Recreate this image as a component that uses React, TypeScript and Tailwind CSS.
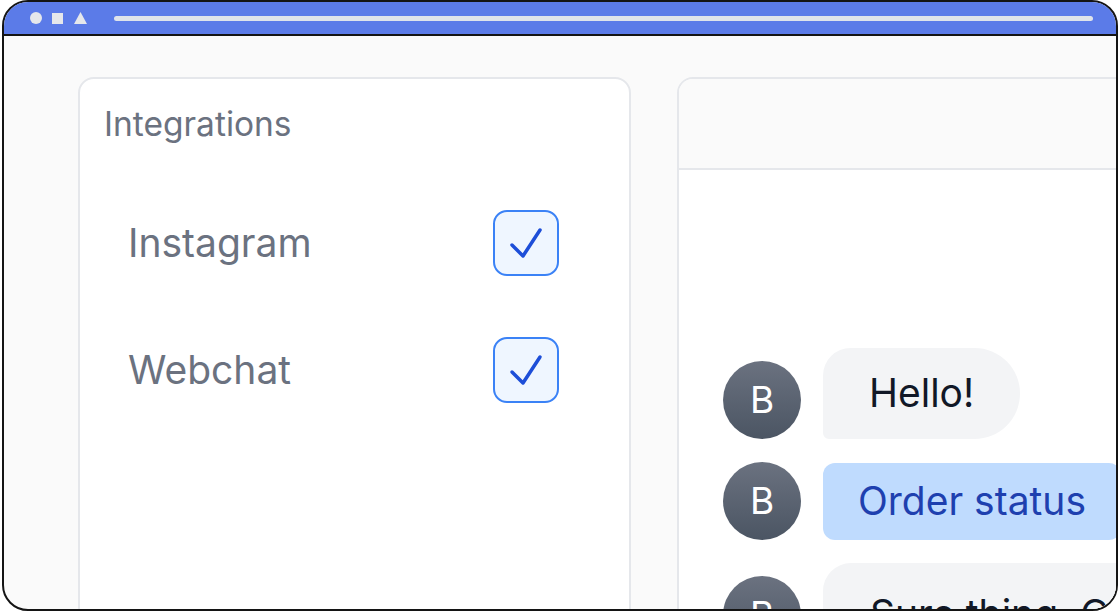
import React from "react";

function Check() {
  return (
    <div className="w-[66px] h-[66px] rounded-[14px] border-2 border-[#3b82f6] bg-[#eff6ff] flex items-center justify-center shrink-0">
      <svg width="66" height="66" viewBox="0 0 66 66" fill="none" className="-m-[2px]">
        <path d="M19 35l11 11 17-26" stroke="#1d4ed8" strokeWidth="3.5" strokeLinecap="round" strokeLinejoin="round" />
      </svg>
    </div>
  );
}

function Avatar() {
  return (
    <div className="w-[78px] h-[78px] rounded-full bg-gradient-to-b from-[#6b7280] to-[#4b5563] flex items-center justify-center text-white text-[37px] shrink-0">
      B
    </div>
  );
}

export default function App() {
  return (
    <div className="w-[1120px] h-[612px] bg-white overflow-hidden" style={{ fontFamily: "Inter, 'Noto Sans', sans-serif" }}>
      <div className="ml-[2px] w-[1116px] h-[611px] border-[2.5px] border-[#141414] rounded-[26px] overflow-hidden bg-[#fafafa] flex flex-col">
        {/* Browser bar */}
        <div className="h-[34px] shrink-0 bg-[#5b7be8] border-b-2 border-[#141414] flex items-center pl-[26px] pr-[23px]">
          <div className="w-[12px] h-[12px] rounded-full bg-[#e5e7eb]" />
          <div className="w-[11px] h-[11px] bg-[#e5e7eb] ml-[10px]" />
          <svg width="13" height="12" viewBox="0 0 13 12" className="ml-[11px]">
            <path d="M6.5 0L13 12H0z" fill="#e5e7eb" />
          </svg>
          <div className="flex-1 h-[5px] rounded-full bg-[#dfe3ea] ml-[27px]" />
        </div>

        {/* Body */}
        <div className="flex gap-[46px] pl-[74px] pt-[41px]">
          {/* Integrations panel */}
          <div className="w-[553px] h-[600px] shrink-0 bg-white border-2 border-[#e5e7eb] rounded-[16px] px-[24px] pt-[25px]">
            <div className="text-[33.5px] leading-[40px] text-[#6b7280]">Integrations</div>
            <div className="mt-[66px] pl-[24px] pr-[46px] flex flex-col gap-[61px]">
              <div className="flex items-center justify-between h-[66px]">
                <span className="text-[39px] text-[#6b7280]">Instagram</span>
                <Check />
              </div>
              <div className="flex items-center justify-between h-[66px]">
                <span className="text-[39px] text-[#6b7280]">Webchat</span>
                <Check />
              </div>
            </div>
          </div>

          {/* Chat panel */}
          <div className="w-[600px] h-[600px] shrink-0 bg-white border-2 border-[#e5e7eb] rounded-[16px] overflow-hidden flex flex-col">
            <div className="h-[91px] shrink-0 bg-[#fafafa] border-b-2 border-[#e5e7eb]" />
            <div className="pt-[178px] pl-[44px] flex flex-col gap-[23px]">
              <div className="flex items-end gap-[22px]">
                <Avatar />
                <div className="h-[91px] px-[46px] flex items-center bg-[#f3f4f6] text-[#111827] text-[39px] rounded-tl-[28px] rounded-tr-[46px] rounded-br-[46px] rounded-bl-[6px]">
                  Hello!
                </div>
              </div>
              <div className="flex items-end gap-[22px]">
                <Avatar />
                <div className="h-[77px] px-[35px] flex items-center bg-[#bfdbfe] text-[#1e40af] text-[39px] rounded-[12px] whitespace-nowrap">
                  Order status
                </div>
              </div>
              <div className="flex items-start gap-[22px]">
                <div className="mt-[13px]">
                  <Avatar />
                </div>
                <div className="pt-[22px] pb-[22px] px-[47px] bg-[#f3f4f6] text-[#111827] text-[39px] rounded-tl-[28px] rounded-tr-[46px] whitespace-nowrap">
                  Sure thing. Can you share your order number?
                </div>
              </div>
            </div>
          </div>
        </div>
      </div>
    </div>
  );
}
